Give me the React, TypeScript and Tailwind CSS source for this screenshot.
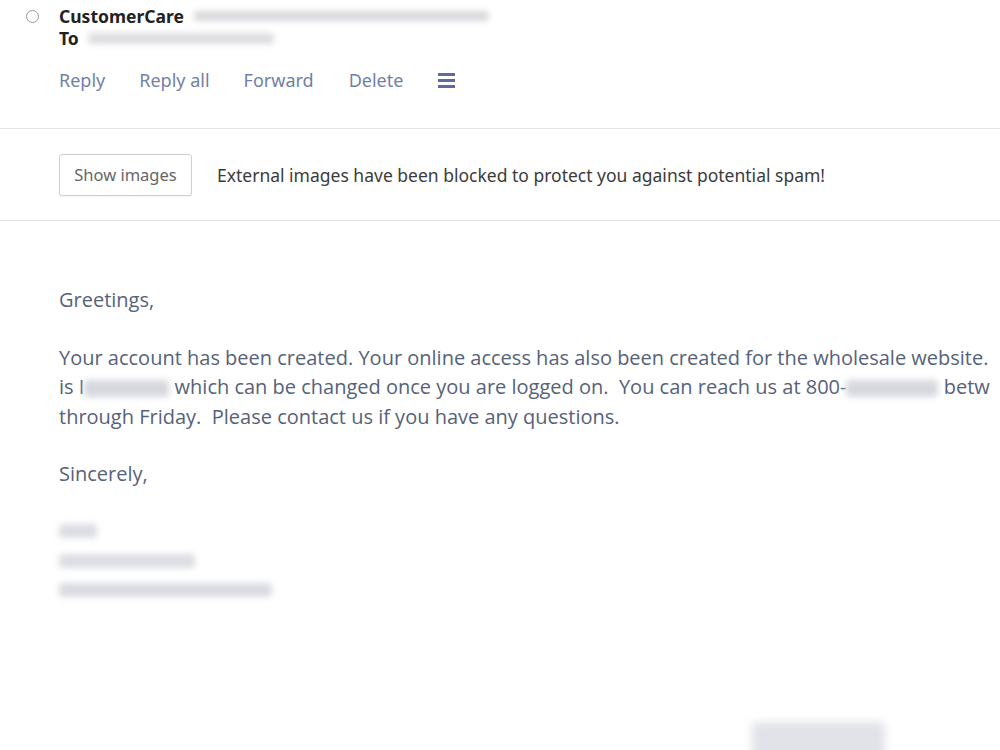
// Email message view
const body = { fontFamily: '"Open Sans", "Noto Sans", sans-serif' }
const ui = { fontFamily: '"Noto Sans", "Open Sans", sans-serif' }

function Blur({ className }: { className: string }) {
  return <span className={`inline-block rounded-sm blur-[3px] ${className}`} />
}

export default function App() {
  return (
    <div className="w-[1000px] h-[750px] overflow-hidden bg-white relative" style={ui}>
      {/* Header */}
      <div className="pt-[5px] pb-[36px] pl-[26px] border-b border-[#e3e3e3]">
        <div className="flex">
          <div className="w-[13px] h-[22px] flex items-center">
            <span className="block w-[13px] h-[13px] rounded-full border border-[#9a9a9a]" />
          </div>
          <div className="ml-[20px]">
            <div className="h-[22px] flex items-center text-[17.5px] font-bold text-[#222]">
              CustomerCare
              <Blur className="ml-[10px] w-[295px] h-[10px] bg-[#d8d8dc]" />
            </div>
            <div className="h-[22px] flex items-center text-[17.5px] font-bold text-[#222]">
              To
              <Blur className="ml-[9px] w-[186px] h-[11px] bg-[#dcdce0]" />
            </div>
            <div className="mt-[19px] h-[24px] flex items-center text-[18px] text-[#7181a6]">
              <span>Reply</span>
              <span className="ml-[34px]">Reply all</span>
              <span className="ml-[34px]">Forward</span>
              <span className="ml-[35px]">Delete</span>
              <span className="ml-[35px] flex flex-col gap-[3px]">
                <span className="block w-[17px] h-[3px] bg-[#5d6c9c]" />
                <span className="block w-[17px] h-[3px] bg-[#5d6c9c]" />
                <span className="block w-[17px] h-[3px] bg-[#5d6c9c]" />
              </span>
            </div>
          </div>
        </div>
      </div>

      {/* Blocked images notice */}
      <div className="pt-[25px] pb-[24px] pl-[59px] flex items-center border-b border-[#e3e3e3]">
        <button className="h-[42px] w-[133px] border border-[#cfcfcf] rounded-[3px] text-[16.5px] text-[#666] bg-white shadow-[0_1px_1px_rgba(0,0,0,0.05)]">
          Show images
        </button>
        <span className="ml-[25px] text-[17.5px] text-[#3b3b3b]">
          External images have been blocked to protect you against potential spam!
        </span>
      </div>

      {/* Message body */}
      <div className="pt-[64px] pl-[59px] text-[20px] leading-[29.5px] text-[#56627a] whitespace-nowrap" style={body}>
        <p className="mb-[28px]">Greetings,</p>
        <p className="mb-[28px]">
          Your account has been created. Your online access has also been created for the wholesale website.
          <br />
          is I<Blur className="w-[85px] h-[17px] bg-[#d6d8de] align-middle" /> which can be changed once you are logged on.&nbsp; You can reach us at 800-
          <Blur className="w-[92px] h-[17px] bg-[#d6d8de] align-middle" /> betw
          <br />
          through Friday.&nbsp; Please contact us if you have any questions.
        </p>
        <p className="mb-[28px]">Sincerely,</p>
        <div className="flex flex-col">
          <div className="h-[29.5px] flex items-center"><Blur className="w-[38px] h-[14px] bg-[#dcdde3]" /></div>
          <div className="h-[29.5px] flex items-center"><Blur className="w-[136px] h-[14px] bg-[#dcdde3]" /></div>
          <div className="h-[29.5px] flex items-center"><Blur className="w-[213px] h-[14px] bg-[#d9dbe1]" /></div>
        </div>
      </div>

      {/* Faded footer button */}
      <div className="absolute left-[752px] top-[722px] w-[133px] h-[40px] bg-[#e2e3e8] blur-[4px] rounded" />
    </div>
  )
}
